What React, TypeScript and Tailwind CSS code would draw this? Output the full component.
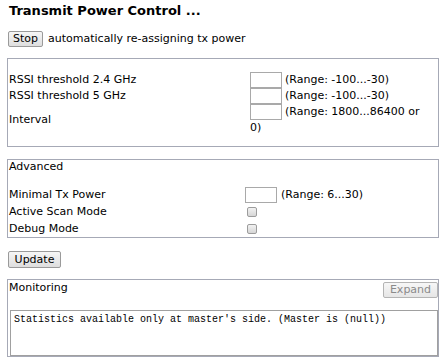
import React from "react";

const RANGE_ROWS = [
  { label: "RSSI threshold 2.4 GHz", range: "(Range: -100...-30)" },
  { label: "RSSI threshold 5 GHz", range: "(Range: -100...-30)" },
];

function Btn({ children, className = "" }: { children: React.ReactNode; className?: string }) {
  return (
    <div
      className={
        "flex items-center justify-center rounded-[2px] border border-[#9a9a9a] bg-gradient-to-b from-[#f6f6f6] to-[#dedede] text-[11px] text-black " +
        className
      }
    >
      {children}
    </div>
  );
}

function TextBox() {
  return <div className="h-[16px] w-[32px] shrink-0 border border-[#a9a9a9] bg-white" />;
}

function Check() {
  return (
    <div className="ml-[2px] h-[10px] w-[10px] rounded-[2px] border border-[#9c9c9c] bg-gradient-to-b from-[#f2f2f2] to-[#d6d6d6]" />
  );
}

export default function App() {
  return (
    <div className="h-[363px] w-[444px] overflow-hidden bg-white pl-[7px] font-['DejaVu_Sans',Verdana,sans-serif] text-[11px] leading-[14px] text-black">
      <h1 className="pl-[2px] pt-[3px] text-[13px] font-bold leading-[16px]">Transmit Power Control ...</h1>

      <div className="mt-[12px] flex h-[16px] items-center pl-[1px]">
        <Btn className="h-[16px] w-[35px]">Stop</Btn>
        <span className="ml-[5px]">automatically re-assigning tx power</span>
      </div>

      {/* thresholds */}
      <div className="mt-[11px] h-[89px] w-[432px] border border-[#a6a9b6] pt-[13px]">
        {RANGE_ROWS.map((r) => (
          <div key={r.label} className="flex h-[16px] items-center">
            <div className="w-[242px] pl-[1px]">{r.label}</div>
            <TextBox />
            <span className="ml-[3px]">{r.range}</span>
          </div>
        ))}
        <div className="flex items-center">
          <div className="w-[242px] pl-[1px]">Interval</div>
          <div className="flex flex-col">
            <div className="flex h-[16px] items-center">
              <TextBox />
              <span className="ml-[3px]">(Range: 1800...86400 or</span>
            </div>
            <div className="mt-[1px] leading-[14px]">0)</div>
          </div>
        </div>
      </div>

      {/* advanced */}
      <div className="mt-[12px] h-[79px] w-[432px] border border-[#a6a9b6]">
        <div className="pl-[1px]">Advanced</div>
        <div className="mt-[12px] flex h-[17px] items-center">
          <div className="w-[237px] pl-[1px]">Minimal Tx Power</div>
          <TextBox />
          <span className="ml-[4px]">(Range: 6...30)</span>
        </div>
        <div className="flex h-[17px] items-center">
          <div className="w-[237px] pl-[1px]">Active Scan Mode</div>
          <Check />
        </div>
        <div className="flex h-[17px] items-center">
          <div className="w-[237px] pl-[1px]">Debug Mode</div>
          <Check />
        </div>
      </div>

      <Btn className="mt-[13px] ml-[1px] h-[17px] w-[53px]">Update</Btn>

      {/* monitoring */}
      <div className="mt-[11px] h-[78px] w-[432px] border border-[#a6a9b6]">
        <div className="flex h-[30px] items-start justify-between">
          <div className="pl-[1px] pt-[1px]">Monitoring</div>
          <div className="mt-[2px] flex h-[16px] w-[55px] items-center justify-center rounded-[2px] border border-[#b4b4b4] bg-gradient-to-b from-[#f7f7f7] to-[#e6e6e6] text-[#8a8a8a]">
            Expand
          </div>
        </div>
        <div className="ml-[2px] h-[46px] w-[428px] border border-[#a0a0a0] bg-white pl-[3px] pt-[2px] font-['Liberation_Mono','Courier_New',monospace] text-[10px] leading-[13px]">
          Statistics available only at master's side. (Master is (null))
        </div>
      </div>
    </div>
  );
}
